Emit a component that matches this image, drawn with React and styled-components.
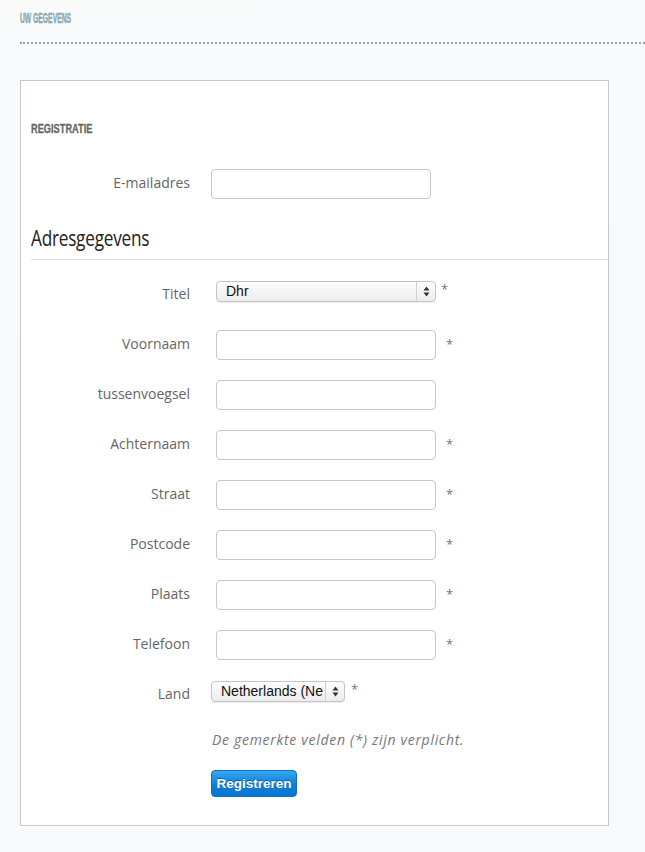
import React from "react"
import styled, { createGlobalStyle } from "styled-components"

const GlobalStyle = createGlobalStyle`
    body {
        margin: 0;
        background: #f8f9fb;
        font-family: "Open Sans", "DejaVu Sans", sans-serif;
    }
`
const Pagina = styled.div`
    width: 645px;
    min-height: 852px;
    background: linear-gradient(175deg, #f9fbfb 0%, #f8f9fb 40%);
`
const Kop = styled.div`
    margin-left: 20px;
    padding: 10px 0 16px;
    border-bottom: 2px dotted #8aa9ac;
`
// smalle koptekst, zoals een condensed lettertype
const Smal = styled.span`
    display: inline-block;
    transform: scaleX(${props => props.schaal});
    transform-origin: left center;
    white-space: nowrap;
`
const KopTitel = styled.h2`
    margin: 0;
    font-family: "Liberation Sans", Arial, sans-serif;
    font-weight: bold;
    font-size: 15px;
    line-height: 16px;
    color: #8aa9ac;
    -webkit-text-stroke: 0.5px #8aa9ac;
    text-transform: uppercase;
`
const Paneel = styled.div`
    box-sizing: border-box;
    margin: 36px 0 0 20px;
    width: 589px;
    height: 746px;
    background: #fff;
    border: 1px solid #c8c8c8;
    padding: 41px 0 0 10px;
`
const SectieTitel = styled.h3`
    margin: 0 0 33px;
    font-family: "Liberation Sans", Arial, sans-serif;
    font-weight: bold;
    font-size: 12.5px;
    line-height: 14px;
    color: #666;
    -webkit-text-stroke: 0.3px #666;
    text-transform: uppercase;
`
const Adres = styled.h2`
    margin: 26px 0 20px;
    padding-bottom: 8px;
    border-bottom: 1px solid #e0e0e0;
    font-family: "Open Sans", sans-serif;
    font-weight: normal;
    font-size: 21px;
    line-height: 26px;
    letter-spacing: -0.3px;
    color: #222;
`
const Rij = styled.div`
    display: grid;
    grid-template-columns: 159px auto;
    column-gap: 21px;
    align-items: center;
    height: 30px;
    margin-bottom: ${props => props.laatste ? 0 : 20}px;
`
const Label = styled.label`
    text-align: right;
    font-size: 14px;
    line-height: 18px;
    margin-top: -2px;
    color: #666;
`
const Veld = styled.div`
    display: flex;
    align-items: ${props => props.boven ? "flex-start" : "center"};
    align-self: stretch;
    padding-top: ${props => props.boven ? 1 : 0}px;
    margin-left: ${props => props.inspring}px;
    gap: ${props => props.afstand}px;
`
const Invoer = styled.input`
    box-sizing: border-box;
    width: 220px;
    height: 30px;
    border: 1px solid #c8c8c8;
    border-radius: 4px;
    background: #fff;
    outline: none;
`
const Keuze = styled.div`
    box-sizing: border-box;
    display: flex;
    width: ${props => props.breedte}px;
    height: 21px;
    border: 1px solid #c4c4c4;
    border-radius: 4px;
    background: linear-gradient(#fdfdfd, #ececec);
    box-shadow: 0 1px 1px rgba(0,0,0,.08);
    font-family: "Liberation Sans", Arial, sans-serif;
    font-size: 14px;
    color: #111;
    overflow: hidden;
`
const KeuzeWaarde = styled.span`
    flex: 1;
    padding-left: 9px;
    line-height: 19px;
    white-space: nowrap;
    overflow: hidden;
`
const KeuzePijl = styled.span`
    width: 18px;
    border-left: 1px solid #d0d0d0;
    display: flex;
    align-items: center;
    justify-content: center;
`
const Ster = styled.span`
    font-size: 13px;
    line-height: 19px;
    margin-top: -1px;
    color: #777;
`
const Onderdeel = styled.div`
    margin-left: 180px;
`
const Noot = styled.p`
    margin: 21px 0 21px 1px;
    font-style: italic;
    font-size: 14px;
    line-height: 18px;
    letter-spacing: 0.7px;
    color: #777;
`
const Knop = styled.button`
    height: 27px;
    width: 86px;
    padding: 0;
    border: 1px solid #0a72c8;
    border-radius: 4px;
    background: linear-gradient(#35a7f2, #0d7fd9 55%, #0a74cf);
    color: #fff;
    font-family: "Liberation Sans", Arial, sans-serif;
    font-weight: bold;
    font-size: 13.5px;
    text-shadow: 0 -1px 0 rgba(0,50,110,.5);
`

const Pijlen = () => (
    <svg width="7" height="11" viewBox="0 0 7 11">
        <path d="M3.5 0.5 L6.5 4.5 L0.5 4.5 Z" fill="#333" />
        <path d="M3.5 10.5 L6.5 6.5 L0.5 6.5 Z" fill="#333" />
    </svg>
)

const velden = ["Voornaam", "tussenvoegsel", "Achternaam", "Straat", "Postcode", "Plaats", "Telefoon"]
const verplicht = { tussenvoegsel: false }

export default () => (
    <Pagina>
        <GlobalStyle />
        <Kop>
            <KopTitel><Smal schaal={0.45}>Uw gegevens</Smal></KopTitel>
        </Kop>
        <Paneel>
            <SectieTitel><Smal schaal={0.74}>Registratie</Smal></SectieTitel>
            <Rij laatste>
                <Label>E-mailadres</Label>
                <Veld inspring={0}>
                    <Invoer type="text" />
                </Veld>
            </Rij>
            <Adres><Smal schaal={0.82}>Adresgegevens</Smal></Adres>
            <Rij>
                <Label>Titel</Label>
                <Veld boven inspring={5} afstand={5}>
                    <Keuze breedte={220}>
                        <KeuzeWaarde>Dhr</KeuzeWaarde>
                        <KeuzePijl><Pijlen /></KeuzePijl>
                    </Keuze>
                    <Ster>*</Ster>
                </Veld>
            </Rij>
            {velden.map(naam =>
                <Rij key={naam}>
                    <Label>{naam}</Label>
                    <Veld inspring={5} afstand={10}>
                        <Invoer type="text" />
                        {verplicht[naam] !== false && <Ster>*</Ster>}
                    </Veld>
                </Rij>
            )}
            <Rij laatste>
                <Label>Land</Label>
                <Veld boven inspring={0} afstand={6}>
                    <Keuze breedte={134}>
                        <KeuzeWaarde>Netherlands (Ne</KeuzeWaarde>
                        <KeuzePijl><Pijlen /></KeuzePijl>
                    </Keuze>
                    <Ster>*</Ster>
                </Veld>
            </Rij>
            <Onderdeel>
                <Noot>De gemerkte velden (*) zijn verplicht.</Noot>
                <Knop>Registreren</Knop>
            </Onderdeel>
        </Paneel>
    </Pagina>
)
